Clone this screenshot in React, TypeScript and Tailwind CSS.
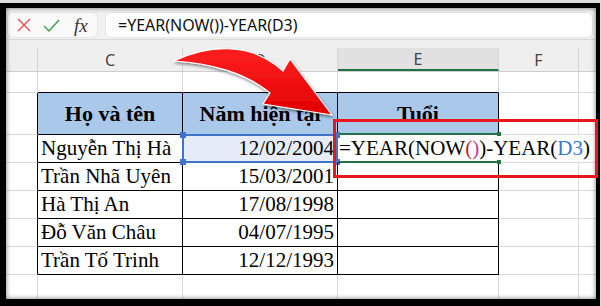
import React from "react";

const serif = "font-[family-name:Liberation_Serif,Times_New_Roman,serif]";
const sans = "font-[family-name:Noto_Sans,Open_Sans,sans-serif]";

const people = [
  ["Nguyễn Thị Hà", "12/02/2004"],
  ["Trần Nhã Uyên", "15/03/2001"],
  ["Hà Thị An", "17/08/1998"],
  ["Đỗ Văn Châu", "04/07/1995"],
  ["Trần Tố Trinh", "12/12/1993"],
];

function FormulaBar() {
  return (
    <div className="flex h-[32px] shrink-0 items-start gap-[7px] border-b border-[#d9d9d9] bg-[#f1f1f1] pl-[1px] pr-[3px] pt-[4px]">
      <div className="flex h-[26px] w-[91px] items-center rounded-md border border-[#e6e6e6] bg-[#fafafa]">
        <svg width="14" height="14" viewBox="0 0 14 14" className="ml-[9px]">
          <path d="M1 1 L13 13 M13 1 L1 13" stroke="#e5484d" strokeWidth="1.3" />
        </svg>
        <svg width="17" height="13" viewBox="0 0 17 13" className="ml-[12px]">
          <path d="M1 7 L6 12 L16 1" stroke="#3c9c4c" strokeWidth="1.4" fill="none" />
        </svg>
        <span className={`ml-[14px] text-[19px] italic leading-none text-[#333] ${serif}`}>fx</span>
      </div>
      <div className={`flex h-[26px] flex-1 items-center rounded-md border border-[#e6e6e6] bg-white pl-[12px] text-[16px] text-[#111] ${sans}`}>
        =YEAR(NOW())-YEAR(D3)
      </div>
    </div>
  );
}

function ColumnHeaders() {
  const cell = `flex items-center justify-center border-r border-[#d4d4d4] text-[16px] text-[#444] ${sans}`;
  return (
    <>
      <div className="h-[8px] shrink-0 bg-[#efefef]" />
      <div className="flex h-[24px] shrink-0 border-b border-[#cfcfcf] bg-[#efefef]">
        <div className="w-[32px] border-r border-[#d4d4d4]" />
        <div className={`${cell} w-[145px]`}>C</div>
        <div className={`${cell} w-[155px]`}>D</div>
        <div className={`${cell} w-[161px] border-b-2 border-b-[#217346] bg-[#e1e1e1] text-[#1d6b40]`}>E</div>
        <div className={`${cell} w-[80px]`}>F</div>
        <div className="flex-1" />
      </div>
    </>
  );
}

function Handle({ className }: { className: string }) {
  return <span className={`absolute h-[6px] w-[6px] bg-[#3f74c9] ${className}`} />;
}

function Sheet() {
  const g = "border-[#dadada]";
  const head = `flex items-center justify-center border-r border-b border-black bg-[#a9c8ea] text-[22px] font-bold text-black ${serif}`;
  return (
    <div className="flex flex-1 flex-col bg-white">
      {/* row 1 */}
      <div className="flex h-[21px] shrink-0">
        <div className={`w-[32px] border-r border-b ${g}`} />
        <div className={`w-[145px] border-r border-b ${g} border-b-black`} />
        <div className={`w-[155px] border-r border-b ${g} border-b-black`} />
        <div className={`w-[161px] border-r border-b ${g} border-b-black`} />
        <div className={`w-[80px] border-r border-b ${g}`} />
        <div className={`flex-1 border-b ${g}`} />
      </div>

      {/* table header */}
      <div className="flex h-[42px] shrink-0">
        <div className={`w-[32px] border-r border-b ${g} border-r-black`} />
        <div className={`${head} w-[145px]`}>Họ và tên</div>
        <div className={`${head} w-[155px]`}>Năm hiện tại</div>
        <div className={`${head} w-[161px]`}>Tuổi</div>
        <div className={`w-[80px] border-r border-b ${g}`} />
        <div className={`flex-1 border-b ${g}`} />
      </div>

      {people.map(([name, date], i) => (
        <div key={name} className={`flex h-[28px] shrink-0 text-[21px] leading-none text-black ${serif}`}>
          <div className={`w-[32px] border-r border-b ${g} border-r-black`} />
          <div className="flex w-[145px] items-center whitespace-nowrap border-r border-b border-black pl-[3px]">
            {name}
          </div>
          <div
            className={`relative flex w-[155px] items-center justify-end border-r border-b border-black pr-[3px] ${
              i === 0 ? "bg-[#e7edf8]" : ""
            }`}
          >
            {date}
            {i === 0 && (
              <span className="absolute -left-px -top-px h-[29px] w-[156px] border-2 border-[#3f74c9]">
                <Handle className="-left-[4px] -top-[4px]" />
                <Handle className="-bottom-[4px] -left-[4px]" />
                <Handle className="-right-[4px] -top-[4px]" />
                <Handle className="-bottom-[4px] -right-[4px]" />
              </span>
            )}
          </div>
          {i === 0 ? (
            <div className="relative flex w-[161px] items-center border-b border-black pl-[1px]">
              <span className="absolute -top-[2px] left-[2px] right-0 h-[2px] bg-[#217346]" />
              <span className="absolute -bottom-[1px] left-[2px] right-0 h-[2px] bg-[#217346]" />
              <span className="absolute -right-[2px] -top-[3px] h-[4px] w-[4px] bg-[#217346]" />
              <span className="absolute -bottom-[2px] -right-[2px] h-[4px] w-[4px] bg-[#217346]" />
              <span className="relative z-10 whitespace-nowrap">
                =YEAR(NOW<span className="text-[#b3262c]">(</span>
                <span className="text-[#c2399c]">)</span>)-YEAR(
                <span className="text-[#3b78d0]">D3</span>)
              </span>
            </div>
          ) : (
            <div className="w-[161px] border-r border-b border-black" />
          )}
          <div className={`w-[80px] border-b ${g} ${i === 0 ? "" : "border-r"}`} />
          <div className={`flex-1 border-b ${g}`} />
        </div>
      ))}

      {/* trailing row */}
      <div className="flex flex-1">
        <div className={`w-[32px] border-r ${g}`} />
        <div className={`w-[145px] border-r ${g}`} />
        <div className={`w-[155px] border-r ${g}`} />
        <div className={`w-[161px] border-r ${g}`} />
        <div className={`w-[80px] border-r ${g}`} />
        <div className="flex-1" />
      </div>
    </div>
  );
}

function CurvedArrow() {
  return (
    <svg
      className="pointer-events-none absolute left-0 top-0 z-20"
      width="601"
      height="306"
      viewBox="0 0 601 306"
    >
      <defs>
        <linearGradient id="arrowFill" x1="0" y1="0" x2="0" y2="1">
          <stop offset="0" stopColor="#ff2020" />
          <stop offset="1" stopColor="#e00000" />
        </linearGradient>
        <filter id="arrowShadow" x="-20%" y="-20%" width="140%" height="140%">
          <feDropShadow dx="1" dy="2" stdDeviation="1.5" floodColor="#000" floodOpacity="0.45" />
        </filter>
      </defs>
      <path
        d="M174 61 C205 46 250 40 283 71 L290 59 L332 115 L263 104 L270 93 C245 72 208 63 174 61 Z"
        fill="url(#arrowFill)"
        stroke="#fff"
        strokeWidth="1.2"
        strokeLinejoin="round"
        filter="url(#arrowShadow)"
      />
    </svg>
  );
}

export default function App() {
  return (
    <div className="relative h-[306px] w-[601px] overflow-hidden bg-[#dcdcdc] pr-[1px] pt-[3px]">
      <div className="relative flex h-[303px] flex-col border-b-[7px] border-l-[6px] border-r-[4px] border-t-[5px] border-black bg-white">
        <FormulaBar />
        <ColumnHeaders />
        <Sheet />
        <div className="pointer-events-none absolute inset-0 z-10 shadow-[inset_0_0_5px_rgba(0,0,0,0.55)]" />
      </div>
      <div className="pointer-events-none absolute left-[333px] top-[119px] z-30 h-[59px] w-[265px] border-[3px] border-[#e8161d]" />
      <CurvedArrow />
    </div>
  );
}
